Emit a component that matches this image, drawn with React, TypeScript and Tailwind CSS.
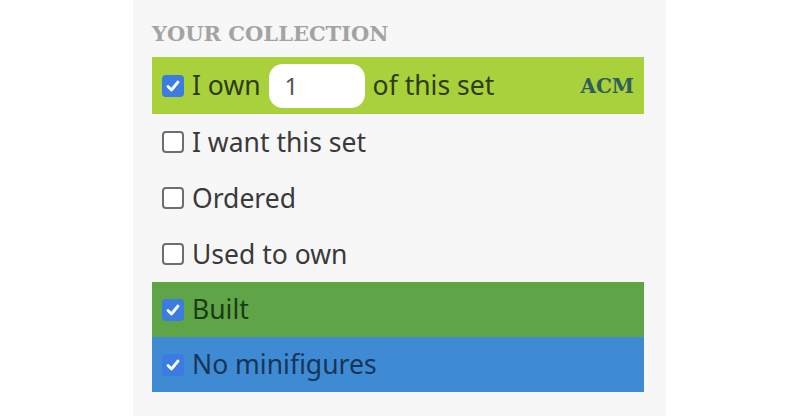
import React from "react";

function Box({ checked }: { checked: boolean }) {
  if (checked) {
    return (
      <span className="flex h-[22px] w-[22px] shrink-0 items-center justify-center rounded-[4px] bg-[#3b7be2]">
        <svg width="16" height="16" viewBox="0 0 16 16">
          <path d="M3 8.5 L6.5 12 L13 4" fill="none" stroke="#fff" strokeWidth="2.8" strokeLinecap="round" strokeLinejoin="round" />
        </svg>
      </span>
    );
  }
  return <span className="h-[22px] w-[22px] shrink-0 rounded-[4px] border-2 border-[#6e6e6e] bg-white" />;
}

function Row({ checked, label, bg, color, h }: { checked: boolean; label: string; bg: string; color: string; h: string }) {
  return (
    <div className={`flex items-center gap-[8px] pl-[10px] ${h} ${bg} ${color}`}>
      <Box checked={checked} />
      <span className="leading-none">{label}</span>
    </div>
  );
}

export default function App() {
  return (
    <div className="flex h-[418px] w-[800px] justify-center bg-white">
      <div
        className="h-[416px] w-[533px] bg-[#f7f7f7] pl-[19px] pr-[22px] pt-[23px] text-[26.5px]"
        style={{ fontFamily: '"Noto Sans", "Open Sans", sans-serif', marginLeft: "-1px" }}
      >
        <div
          className="h-[34px] text-[21px] font-bold leading-none text-[#a3a3a3]"
          style={{ fontFamily: '"DejaVu Serif", serif' }}
        >
          YOUR COLLECTION
        </div>
        <div className="flex h-[57px] items-center bg-[#a9d13c] pl-[10px] pr-[10px] text-[#2e3b17]">
          <Box checked />
          <span className="ml-[8px] leading-none">I own</span>
          <span className="ml-[8px] flex h-[44px] w-[96px] items-center rounded-[14px] bg-white pl-[16px] text-[24px] text-[#555]">
            1
          </span>
          <span className="ml-[8px] leading-none">of this set</span>
          <span
            className="ml-auto text-[20px] font-bold text-[#2f5e5b]"
            style={{ fontFamily: '"DejaVu Serif", serif' }}
          >
            ACM
          </span>
        </div>
        <Row checked={false} label="I want this set" bg="" color="text-[#3a3a3a]" h="h-[56px]" />
        <Row checked={false} label="Ordered" bg="" color="text-[#3a3a3a]" h="h-[56px]" />
        <Row checked={false} label="Used to own" bg="" color="text-[#3a3a3a]" h="h-[56px]" />
        <Row checked label="Built" bg="bg-[#5fa547]" color="text-[#1d3a14]" h="h-[55px]" />
        <Row checked label="No minifigures" bg="bg-[#3e8bd3]" color="text-[#16355a]" h="h-[55px]" />
      </div>
    </div>
  );
}
